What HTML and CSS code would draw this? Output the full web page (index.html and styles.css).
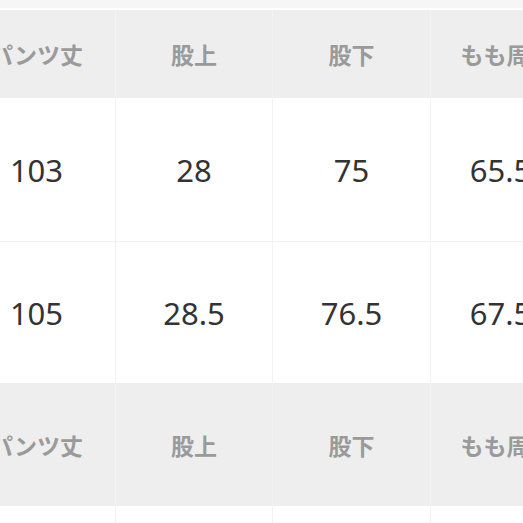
FILE: index.html
```html
<!DOCTYPE html>
<html lang="ja">
<head>
<meta charset="utf-8">
<link rel="stylesheet" href="styles.css">
</head>
<body>
<div class="strip"></div>
<div class="size-table">
  <div class="row head h1">
    <div class="cell">パンツ丈</div>
    <div class="cell">股上</div>
    <div class="cell">股下</div>
    <div class="cell">もも周り</div>
  </div>
  <div class="row data r1">
    <div class="cell">103</div>
    <div class="cell">28</div>
    <div class="cell">75</div>
    <div class="cell">65.5</div>
  </div>
  <div class="row data r2">
    <div class="cell">105</div>
    <div class="cell">28.5</div>
    <div class="cell">76.5</div>
    <div class="cell">67.5</div>
  </div>
  <div class="row head h2">
    <div class="cell">パンツ丈</div>
    <div class="cell">股上</div>
    <div class="cell">股下</div>
    <div class="cell">もも周り</div>
  </div>
  <div class="row data r3">
    <div class="cell"></div>
    <div class="cell"></div>
    <div class="cell"></div>
    <div class="cell"></div>
  </div>
</div>
</body>
</html>
```

FILE: styles.css
```css
html, body {
  margin: 0;
  padding: 0;
  background: #ffffff;
  overflow: hidden;
  width: 523px;
  height: 523px;
}
.strip {
  height: 8px;
  background: #f6f6f6;
  border-bottom: 2px solid #ffffff;
}
.size-table {
  margin-left: -42px;
  width: 640px;
}
.row {
  display: grid;
  grid-template-columns: 158px 157px 158px 140px;
}
.cell {
  display: flex;
  align-items: center;
  justify-content: center;
  border-right: 1px solid #f3f3f3;
  white-space: nowrap;
}
.head {
  background: #eeeeee;
  color: #9a9a9a;
  font-family: "Noto Sans CJK JP", "Noto Sans", sans-serif;
  font-weight: 700;
  font-size: 23px;
}
.head .cell:last-child {
  padding-left: 12px;
}
.h1 { height: 88px; }
.h2 { height: 123px; }
.data {
  background: #ffffff;
  color: #333333;
  font-family: "Noto Sans", "Open Sans", sans-serif;
  font-size: 31px;
  border-bottom: 1px solid #f1f1f1;
}
.r1 { height: 143px; }
.r2 { height: 141px; border-bottom: none; }
.r3 { height: 40px; border-bottom: none; }
```
